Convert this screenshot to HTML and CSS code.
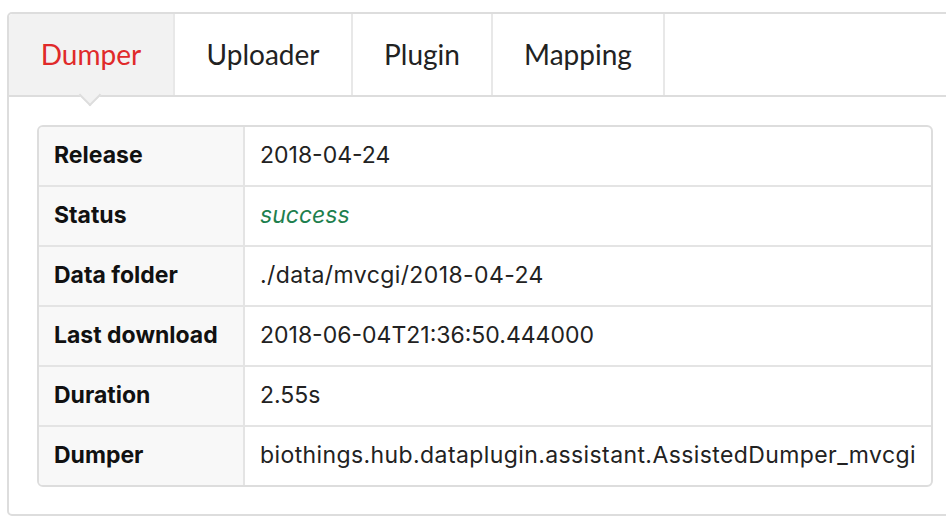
FILE: index.html
```html
<!DOCTYPE html>
<html>
<head>
<meta charset="utf-8">
<link rel="stylesheet" href="styles.css">
</head>
<body>
<div class="card">
  <div class="tabs">
    <div class="tab active">Dumper</div>
    <div class="tab">Uploader</div>
    <div class="tab">Plugin</div>
    <div class="tab">Mapping</div>
  </div>
  <div class="content">
    <table class="info">
      <tr><th>Release</th><td>2018-04-24</td></tr>
      <tr><th>Status</th><td class="ok">success</td></tr>
      <tr><th>Data folder</th><td class="wide">./data/mvcgi/2018-04-24</td></tr>
      <tr><th>Last download</th><td>2018-06-04T21:36:50.444000</td></tr>
      <tr><th>Duration</th><td>2.55s</td></tr>
      <tr><th>Dumper</th><td class="wide">biothings.hub.dataplugin.assistant.AssistedDumper_mvcgi</td></tr>
    </table>
  </div>
</div>
</body>
</html>
```
FILE: styles.css
```css
html, body { margin: 0; padding: 0; background: #fff; }
body { padding: 12px 0 0 7px; font-family: Lato, "Liberation Sans", sans-serif; color: #222; overflow: hidden; }
.card {
  width: 960px;
  border: 2px solid #dddddd;
  border-radius: 5px;
  box-sizing: border-box;
  height: 504px;
}
.tabs {
  display: flex;
  height: 83px;
  border-bottom: 2px solid #dddddd;
  box-sizing: border-box;
}
.tab {
  display: flex;
  align-items: center;
  justify-content: center;
  font-size: 28px;
  color: #222;
  border-right: 2px solid #e8e8e8;
  box-sizing: border-box;
  padding-bottom: 2px;
}
.tab:nth-child(1) { width: 166px; }
.tab:nth-child(2) { width: 178px; }
.tab:nth-child(3) { width: 140px; }
.tab:nth-child(4) { width: 172px; }
.tab.active {
  background: #f2f2f2;
  color: #e02a2a;
  position: relative;
  border-top-left-radius: 4px;
}
.tab.active::after {
  content: "";
  position: absolute;
  left: 73px;
  bottom: -8px;
  width: 16px;
  height: 16px;
  background: #f2f2f2;
  border-right: 2px solid #dddddd;
  border-bottom: 2px solid #dddddd;
  box-sizing: border-box;
  transform: rotate(45deg);
}
.content { padding: 28px 0 0 28px; }
.info {
  width: 896px;
  border-collapse: separate;
  border-spacing: 0;
  border: 2px solid #dddddd;
  border-radius: 6px;
  font-family: Inter, "Liberation Sans", sans-serif;
  font-size: 23px;
  overflow: hidden;
}
.info th, .info td {
  height: 60px;
  box-sizing: border-box;
  padding: 0 15px 2px;
  text-align: left;
  border-top: 2px solid #e4e4e4;
}
.info tr:first-child th, .info tr:first-child td { border-top: none; height: 58px; }
.info th {
  width: 206px;
  background: #f8f8f8;
  font-weight: 700;
  color: #111;
  border-right: 2px solid #e4e4e4;
}
.info td { color: #222; font-weight: 400; }
.info td.wide { letter-spacing: 0.4px; }
.info td.ok { color: #1e7f4e; font-style: italic; }
```
